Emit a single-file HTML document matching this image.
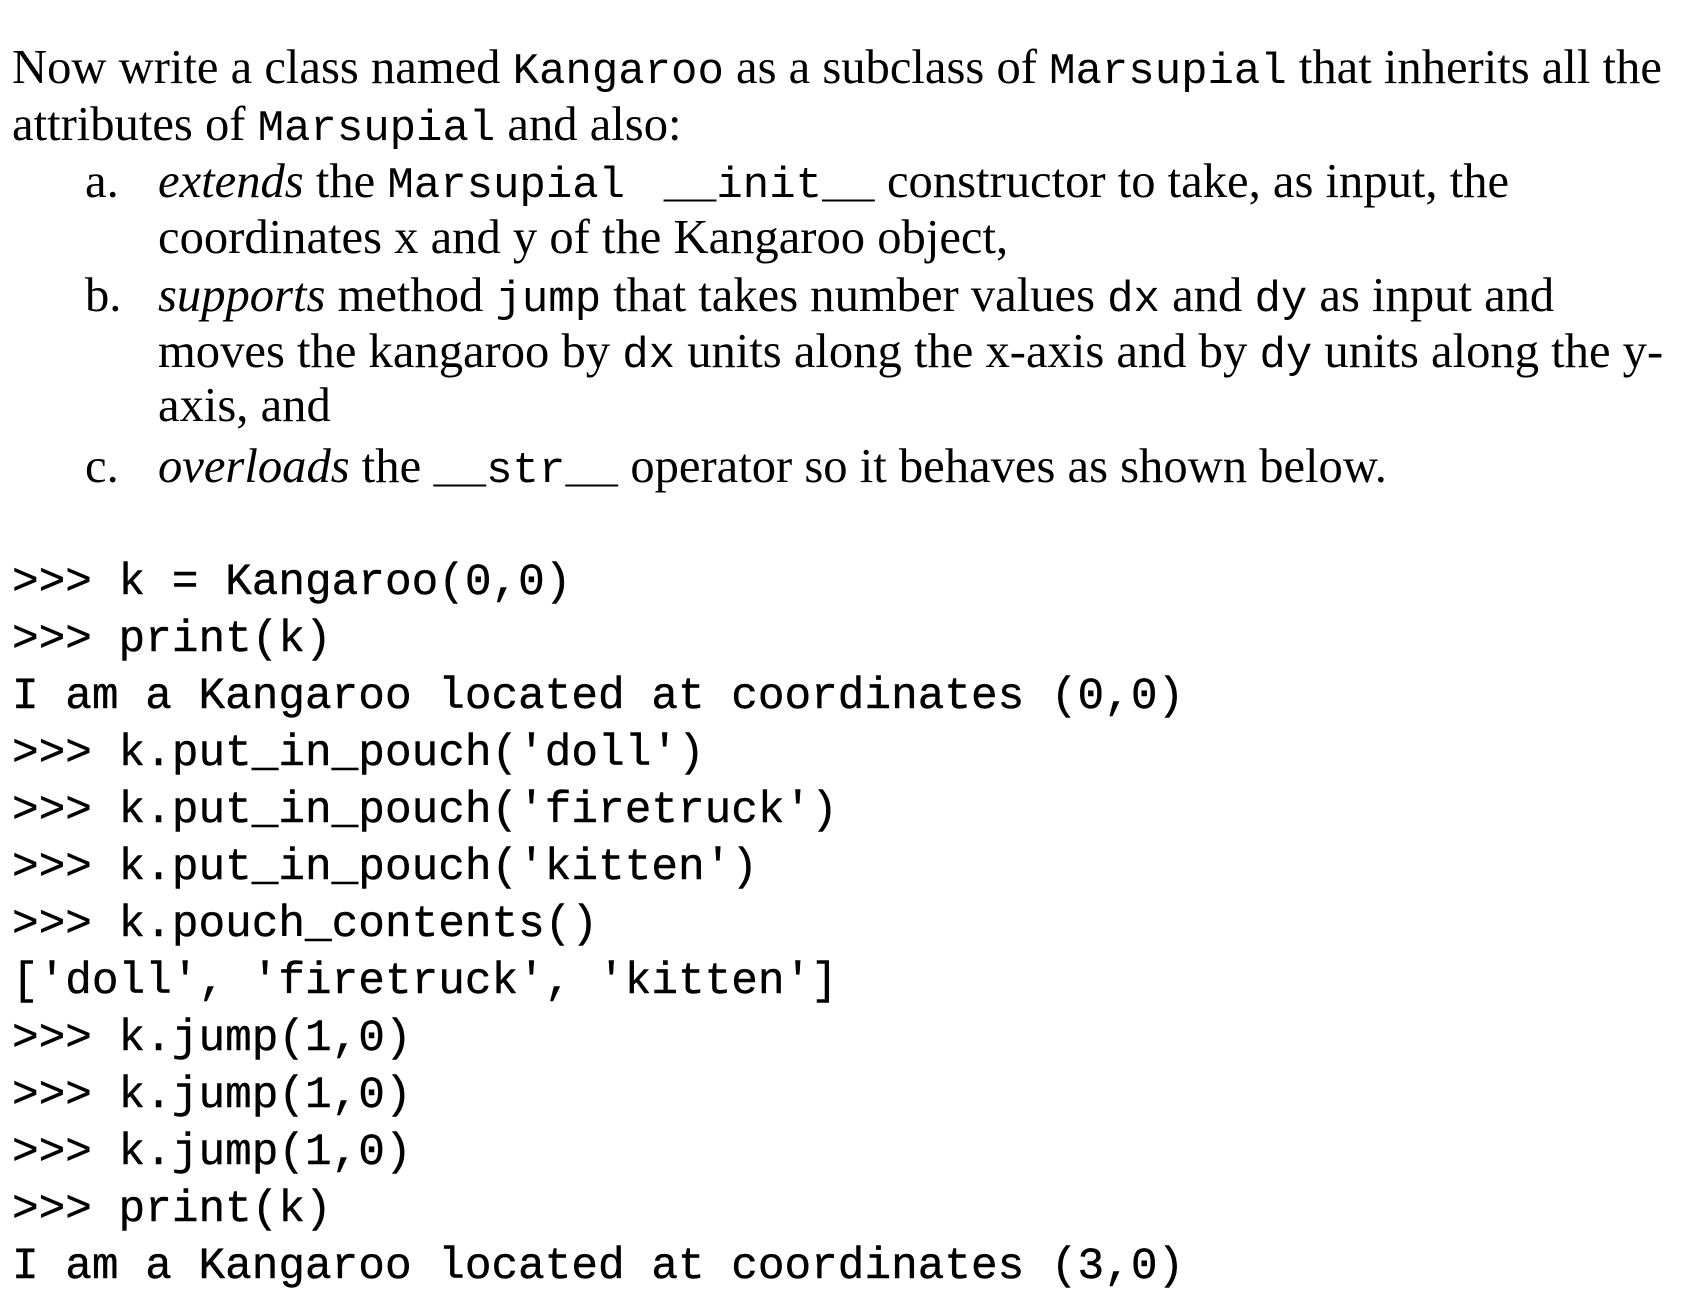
<!DOCTYPE html>
<html><head><meta charset="utf-8"><style>
html,body{margin:0;padding:0;background:#fff;width:1684px;height:1306px;overflow:hidden;}
.p{position:absolute;left:12px;font-family:"Liberation Serif",serif;font-size:48.6px;line-height:47px;white-space:nowrap;color:#000;}
.m{font-family:"Liberation Mono",monospace;font-size:44px;}
.c{position:absolute;left:12px;font-family:"Liberation Mono",monospace;font-size:44.4px;line-height:44px;white-space:pre;color:#000;-webkit-text-stroke:0.4px #000;}
.lab{position:absolute;left:85px;}
.ind{position:absolute;left:158px;}
i{font-style:italic;}
</style></head><body>
<div class="p" style="top:44px">Now write a class named <span class="m">Kangaroo</span> as a subclass of <span class="m">Marsupial</span> that inherits all the</div>
<div class="p" style="top:101px">attributes of <span class="m">Marsupial</span> and also:</div>

<div class="p" style="top:158px;left:0"><span class="lab">a.</span><span class="ind"><i>extends</i> the <span class="m">Marsupial&nbsp;</span> <span class="m">__init__</span> constructor to take, as input, the</span></div>
<div class="p" style="top:214px;left:0"><span class="ind">coordinates x and y of the Kangaroo object,</span></div>
<div class="p" style="top:272px;left:0"><span class="lab">b.</span><span class="ind"><i>supports</i> method <span class="m">jump</span> that takes number values <span class="m">dx</span> and <span class="m">dy</span> as input and</span></div>
<div class="p" style="top:328px;left:0"><span class="ind">moves the kangaroo by <span class="m">dx</span> units along the x-axis and by <span class="m">dy</span> units along the y-</span></div>
<div class="p" style="top:382px;left:0"><span class="ind">axis, and</span></div>
<div class="p" style="top:443px;left:0"><span class="lab">c.</span><span class="ind"><i>overloads</i> the <span class="m">__str__</span> operator so it behaves as shown below.</span></div>

<div class="c" style="top:561px">&gt;&gt;&gt; k = Kangaroo(0,0)</div>
<div class="c" style="top:618px">&gt;&gt;&gt; print(k)</div>
<div class="c" style="top:675px">I am a Kangaroo located at coordinates (0,0)</div>
<div class="c" style="top:732px">&gt;&gt;&gt; k.put_in_pouch('doll')</div>
<div class="c" style="top:789px">&gt;&gt;&gt; k.put_in_pouch('firetruck')</div>
<div class="c" style="top:846px">&gt;&gt;&gt; k.put_in_pouch('kitten')</div>
<div class="c" style="top:903px">&gt;&gt;&gt; k.pouch_contents()</div>
<div class="c" style="top:960px">['doll', 'firetruck', 'kitten']</div>
<div class="c" style="top:1017px">&gt;&gt;&gt; k.jump(1,0)</div>
<div class="c" style="top:1074px">&gt;&gt;&gt; k.jump(1,0)</div>
<div class="c" style="top:1131px">&gt;&gt;&gt; k.jump(1,0)</div>
<div class="c" style="top:1188px">&gt;&gt;&gt; print(k)</div>
<div class="c" style="top:1245px">I am a Kangaroo located at coordinates (3,0)</div>
</body></html>
